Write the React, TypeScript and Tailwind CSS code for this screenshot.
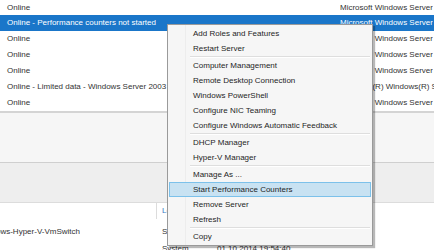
import React from 'react';

type MenuEntry = { label: string; active?: boolean } | 'sep';

const rows = [
  { status: 'Online', os: 'Microsoft Windows Server' },
  { status: 'Online - Performance counters not started', os: 'Microsoft Windows Server', selected: true },
  { status: 'Online', os: 'Microsoft Windows Server' },
  { status: 'Online', os: 'Microsoft Windows Server' },
  { status: 'Online', os: 'Microsoft Windows Server' },
  { status: 'Online - Limited data - Windows Server 2003', os: 'Microsoft(R) Windows(R) Server 2003' },
  { status: 'Online', os: 'Microsoft Windows Server' },
];

const menu: MenuEntry[] = [
  { label: 'Add Roles and Features' },
  { label: 'Restart Server' },
  'sep',
  { label: 'Computer Management' },
  { label: 'Remote Desktop Connection' },
  { label: 'Windows PowerShell' },
  { label: 'Configure NIC Teaming' },
  { label: 'Configure Windows Automatic Feedback' },
  'sep',
  { label: 'DHCP Manager' },
  { label: 'Hyper-V Manager' },
  'sep',
  { label: 'Manage As ...' },
  { label: 'Start Performance Counters', active: true },
  { label: 'Remove Server' },
  { label: 'Refresh' },
  'sep',
  { label: 'Copy' },
];

function ContextMenu() {
  return (
    <div className="absolute left-[167px] top-[24px] w-[206px] border border-[#9a9a9a] bg-[#f6f6f6] pt-[1px] pb-[1px] shadow-[2px_2px_1px_rgba(0,0,0,0.28)] bg-[linear-gradient(to_right,#f6f6f6_0,#f6f6f6_17px,#ededed_17px,#ededed_18px,#f6f6f6_18px)]">
      {menu.map((item, i) =>
        item === 'sep' ? (
          <div key={i} className="ml-[22px] mr-[2px] h-[2px] border-t border-[#dedede] border-b border-b-white" />
        ) : (
          <div
            key={i}
            className={`mx-[1px] flex h-[15px] items-center border pl-[23px] text-[#1e1e1e] ${
              item.active ? 'border-[#7cc1ea] bg-[#c8e2f2]' : 'border-transparent'
            }`}
          >
            {item.label}
          </div>
        )
      )}
    </div>
  );
}

export default function App() {
  return (
    <div
      className="relative h-[250px] w-[434px] overflow-hidden bg-white text-[8px] leading-none text-[#333]"
      style={{ fontFamily: '"Liberation Sans", Arial, sans-serif' }}
    >
      <div className="flex flex-col">
        {rows.map((r, i) => (
          <div
            key={i}
            className={`flex items-center whitespace-nowrap ${i === 0 ? 'h-[15px]' : 'h-[16px]'} ${
              r.selected ? 'bg-[#1a76c9] text-white' : ''
            }`}
          >
            <div className="w-[340px] shrink-0 pl-[7px]">{r.status}</div>
            <div className="overflow-hidden">{r.os}</div>
          </div>
        ))}
      </div>
      <div className="h-[2px] bg-[#d4d4d4]" />
      <div className="h-[49px] bg-[#f6f6f6]" />
      <div className="h-px bg-[#cfcfcf]" />
      <div className="h-[39px] bg-[#eeeeee]" />
      <div className="h-px bg-[#dcdcdc]" />

      <div className="flex h-[16px] items-center whitespace-nowrap">
        <div className="h-full w-[157px] border-r border-[#dcdcdc]" />
        <div className="pl-[5px] text-[#3b78c4]">Log</div>
      </div>
      <div className="mt-[5px] flex h-[16px] items-center whitespace-nowrap">
        <div className="flex w-[80px] justify-end overflow-hidden">Microsoft-Windows-Hyper-V-VmSwitch</div>
        <div className="w-[82px]" />
        <div className="w-[55px]">System</div>
        <div>01.10.2014 19:54:40</div>
      </div>
      <div className="mt-[1px] flex h-[16px] items-center whitespace-nowrap">
        <div className="w-[162px]" />
        <div className="w-[55px]">System</div>
        <div>01.10.2014 19:54:40</div>
      </div>

      <ContextMenu />
    </div>
  );
}
